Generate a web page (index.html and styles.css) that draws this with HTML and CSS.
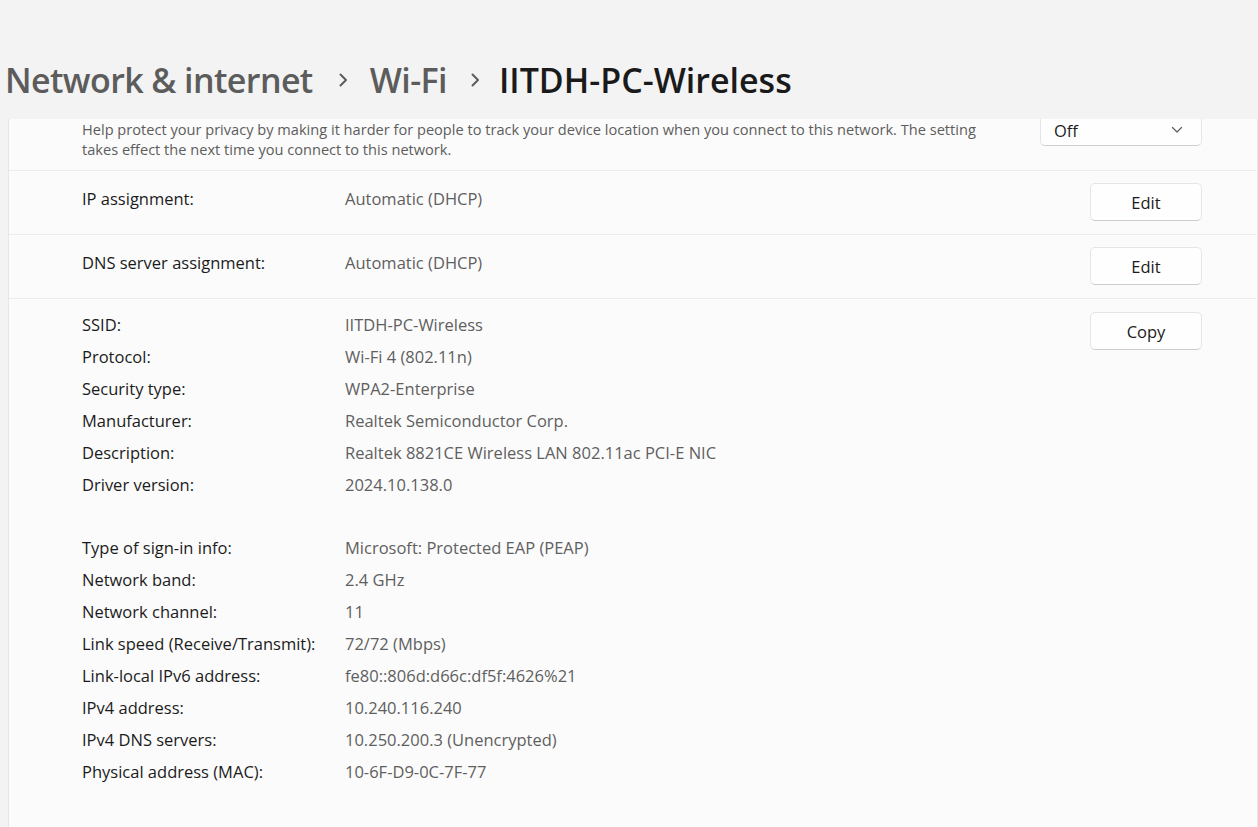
FILE: index.html
```html
<!DOCTYPE html>
<html>
<head>
<meta charset="utf-8">
<link rel="stylesheet" href="styles.css">
</head>
<body>
<header class="header">
  <h1 class="crumbs">
    <span class="crumb">Network &amp; internet</span>
    <svg class="sep sep-1" width="12" height="18" viewBox="0 0 12 18"><path d="M3.5 3.5 L9 9 L3.5 14.5" fill="none" stroke="#5c5c5c" stroke-width="2" stroke-linecap="round" stroke-linejoin="round"/></svg>
    <span class="crumb">Wi-Fi</span>
    <svg class="sep sep-2" width="12" height="18" viewBox="0 0 12 18"><path d="M3.5 3.5 L9 9 L3.5 14.5" fill="none" stroke="#5c5c5c" stroke-width="2" stroke-linecap="round" stroke-linejoin="round"/></svg>
    <span class="crumb current">IITDH-PC-Wireless</span>
  </h1>
</header>
<main class="viewport">
  <section class="card">
    <div class="row row-privacy">
      <p class="help">Help protect your privacy by making it harder for people to track your device location when you connect to this network. The setting takes effect the next time you connect to this network.</p>
      <div class="dropdown">
        <span>Off</span>
        <svg width="12" height="8" viewBox="0 0 12 8"><path d="M1.5 1.5 L6 6 L10.5 1.5" fill="none" stroke="#5f5f5f" stroke-width="1.2" stroke-linecap="round" stroke-linejoin="round"/></svg>
      </div>
    </div>
    <div class="row row-setting">
      <div class="pair"><span class="label">IP assignment:</span><span class="value">Automatic (DHCP)</span></div>
      <button class="btn">Edit</button>
    </div>
    <div class="row row-setting">
      <div class="pair"><span class="label">DNS server assignment:</span><span class="value">Automatic (DHCP)</span></div>
      <button class="btn">Edit</button>
    </div>
    <div class="row row-details">
      <div class="details">
        <div class="group">
          <div class="pair line"><span class="label">SSID:</span><span class="value">IITDH-PC-Wireless</span></div>
          <div class="pair line"><span class="label">Protocol:</span><span class="value">Wi-Fi 4 (802.11n)</span></div>
          <div class="pair line"><span class="label">Security type:</span><span class="value">WPA2-Enterprise</span></div>
          <div class="pair line"><span class="label">Manufacturer:</span><span class="value">Realtek Semiconductor Corp.</span></div>
          <div class="pair line"><span class="label">Description:</span><span class="value">Realtek 8821CE Wireless LAN 802.11ac PCI-E NIC</span></div>
          <div class="pair line"><span class="label">Driver version:</span><span class="value">2024.10.138.0</span></div>
        </div>
        <div class="group">
          <div class="pair line"><span class="label">Type of sign-in info:</span><span class="value">Microsoft: Protected EAP (PEAP)</span></div>
          <div class="pair line"><span class="label">Network band:</span><span class="value">2.4 GHz</span></div>
          <div class="pair line"><span class="label">Network channel:</span><span class="value">11</span></div>
          <div class="pair line"><span class="label">Link speed (Receive/Transmit):</span><span class="value">72/72 (Mbps)</span></div>
          <div class="pair line"><span class="label">Link-local IPv6 address:</span><span class="value">fe80::806d:d66c:df5f:4626%21</span></div>
          <div class="pair line"><span class="label">IPv4 address:</span><span class="value">10.240.116.240</span></div>
          <div class="pair line"><span class="label">IPv4 DNS servers:</span><span class="value">10.250.200.3 (Unencrypted)</span></div>
          <div class="pair line"><span class="label">Physical address (MAC):</span><span class="value">10-6F-D9-0C-7F-77</span></div>
        </div>
      </div>
      <button class="btn">Copy</button>
    </div>
  </section>
</main>
</body>
</html>
```

FILE: styles.css
```css
* { box-sizing: border-box; }
html, body { margin: 0; padding: 0; }
body {
  background: #f3f3f3;
  font-family: "Open Sans", "Noto Sans", "Liberation Sans", sans-serif;
  color: #1b1b1b;
  width: 1258px;
  height: 827px;
  overflow: hidden;
}
.header {
  height: 119px;
  padding: 56px 0 0 5px;
}
.crumbs {
  margin: 0;
  display: flex;
  align-items: center;
  font-size: 34px;
  font-weight: 600;
  line-height: 48px;
  letter-spacing: -0.6px;
  white-space: nowrap;
}
.crumb { color: #5c5c5c; }
.crumb.current { color: #1a1a1a; letter-spacing: 0; }
.sep-1 { margin: 0 21px 0 24px; }
.sep-2 { margin: 0 18px 0 22px; }
.viewport {
  height: 708px;
  overflow: hidden;
  margin-left: 8px;
}
.card {
  margin-top: -21px;
  width: 1250px;
  background: #fbfbfb;
  border: 1px solid #e6e6e6;
  border-radius: 6px;
  min-height: 800px;
}
.row {
  display: flex;
  justify-content: space-between;
  align-items: flex-start;
  padding: 0 55px 0 73px;
  border-bottom: 1px solid #ececec;
}
.row-privacy {
  padding-top: 15px;
  padding-bottom: 11px;
}
.help {
  margin: 5px 0 0 0;
  width: 910px;
  font-size: 14.6px;
  line-height: 20px;
  color: #5d5d5d;
}
.dropdown {
  width: 162px;
  height: 32px;
  background: #fefefe;
  border: 1px solid #e5e5e5;
  border-bottom-color: #cfcfcf;
  border-radius: 5px;
  display: flex;
  align-items: center;
  justify-content: space-between;
  padding: 0 18px 0 13px;
  font-size: 16.5px;
  color: #1b1b1b;
}
.row-setting {
  padding-top: 12px;
  padding-bottom: 13px;
}
.row-setting .pair { margin-top: 4px; }
.pair {
  display: flex;
  font-size: 16.5px;
  line-height: 24px;
}
.label { width: 263px; flex: none; color: #1b1b1b; }
.value { color: #5f5f5f; }
.btn {
  width: 112px;
  height: 38px;
  background: #fefefe;
  border: 1px solid #e5e5e5;
  border-bottom-color: #cccccc;
  border-radius: 5px;
  font-family: inherit;
  font-size: 16.5px;
  color: #1b1b1b;
  padding: 0;
}
.row-details {
  padding-top: 13px;
  border-bottom: none;
}
.details {
  margin-top: -3px;
  display: flex;
  flex-direction: column;
  gap: 31px;
}
.line { line-height: 32px; }
```
